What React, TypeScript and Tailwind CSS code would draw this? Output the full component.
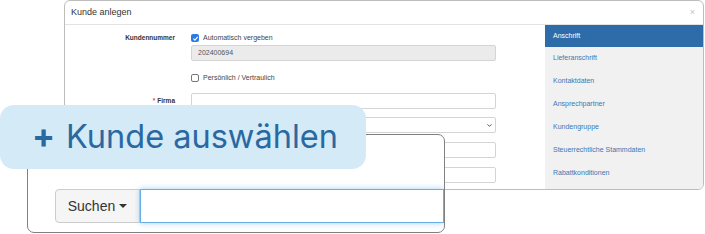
import { ChevronDown } from 'lucide-react'

const tabs = [
  'Anschrift',
  'Lieferanschrift',
  'Kontaktdaten',
  'Ansprechpartner',
  'Kundengruppe',
  'Steuerrechtliche Stammdaten',
  'Rabattkonditionen',
]

function Checkbox({ checked }: { checked?: boolean }) {
  return checked ? (
    <span className="w-[8px] h-[8px] rounded-[2px] bg-[#2d7be0] flex items-center justify-center">
      <svg viewBox="0 0 10 10" className="w-[7px] h-[7px]">
        <path d="M2 5.2 L4.2 7.4 L8.2 2.6" fill="none" stroke="white" strokeWidth="1.6" />
      </svg>
    </span>
  ) : (
    <span className="w-[8px] h-[8px] rounded-[2px] border border-[#777] bg-white" />
  )
}

function Row({ label, required, children, className }: { label?: string; required?: boolean; children: React.ReactNode; className?: string }) {
  return (
    <div className={`flex items-center ${className ?? ''}`}>
      <div className="w-[110px] text-right text-[6.5px] font-bold text-[#333] leading-none">
        {required && <span className="text-[#d9534f] mr-[2px]">*</span>}
        {label}
      </div>
      <div className="ml-[16px] w-[305px]">{children}</div>
    </div>
  )
}

function Field({ gray, select, value }: { gray?: boolean; select?: boolean; value?: string }) {
  return (
    <div
      className={`h-[16px] border border-[#d4d4d4] rounded-[2px] flex items-center justify-between pl-[6px] pr-[2px] text-[7px] text-[#555] ${gray ? 'bg-[#ebebeb]' : 'bg-white'}`}
    >
      <span>{value}</span>
      {select && <ChevronDown className="w-[7px] h-[7px] text-[#444]" strokeWidth={3} />}
    </div>
  )
}

export default function App() {
  return (
    <div className="relative w-[705px] h-[234px] bg-white overflow-hidden" style={{ fontFamily: '"Liberation Sans", Arial, sans-serif' }}>
      {/* back: modal */}
      <div className="absolute left-[64px] top-0 w-[640px] h-[190px] border border-[#bdbdbd] rounded-[6px] bg-white overflow-hidden flex flex-col">
        <div className="h-[24px] shrink-0 border-b border-[#e3e3e3] flex items-center justify-between pl-[6px] pr-[8px]">
          <span className="text-[9px] text-[#333]">Kunde anlegen</span>
          <span className="text-[9px] text-[#c4c4c4] leading-none">×</span>
        </div>
        <div className="flex flex-1">
          <div className="w-[480px] pt-[6px]">
            <Row label="Kundennummer" className="h-[14px]">
              <div className="flex items-center gap-[4px]">
                <Checkbox checked />
                <span className="text-[7px] text-[#444]">Automatisch vergeben</span>
              </div>
            </Row>
            <Row>
              <Field gray value="202400694" />
            </Row>
            <Row className="mt-[10px] h-[14px]">
              <div className="flex items-center gap-[4px]">
                <Checkbox />
                <span className="text-[7px] text-[#444]">Persönlich / Vertraulich</span>
              </div>
            </Row>
            <Row label="Firma" required className="mt-[8px]">
              <Field />
            </Row>
            <Row className="mt-[8px]">
              <Field select />
            </Row>
            <Row className="mt-[9px]">
              <Field />
            </Row>
            <Row className="mt-[9px]">
              <Field />
            </Row>
          </div>
          <div className="flex-1 bg-[#f1f1f1]">
            {tabs.map((t, i) => (
              <div
                key={t}
                className={`flex items-center pl-[8px] text-[7px] ${i === 0 ? 'h-[22px] bg-[#2d6ca8] text-white' : 'h-[23px] text-[#3a78b5]'}`}
              >
                {t}
              </div>
            ))}
          </div>
        </div>
      </div>

      {/* front: search card */}
      <div className="absolute left-[27px] top-[134px] w-[418px] h-[99px] border border-[#808080] rounded-[7px] bg-white overflow-hidden">
        <div className="flex mt-[54px] ml-[27px] h-[34px]">
          <div className="w-[85px] shrink-0 border border-[#cccccc] rounded-l-[4px] bg-[#f5f5f5] flex items-center justify-center gap-[4px] text-[14px] text-[#333]">
            Suchen
            <span className="w-0 h-0 border-l-[4px] border-r-[4px] border-t-[4px] border-l-transparent border-r-transparent border-t-[#333]" />
          </div>
          <div className="flex-1 border border-[#66afe9] shadow-[0_0_6px_rgba(102,175,233,0.6)] bg-white" />
        </div>
      </div>

      {/* badge */}
      <div className="absolute left-0 top-[105px] w-[366px] h-[64px] rounded-[14px] bg-[#d4eaf6] flex items-center pl-[32px] text-[#2a68a1]" style={{ fontFamily: 'Inter, sans-serif' }}>
        <span className="text-[34px] font-bold leading-none mr-[11px] -mt-[3px]">+</span>
        <span className="text-[32.5px] leading-none">Kunde auswählen</span>
      </div>
    </div>
  )
}
